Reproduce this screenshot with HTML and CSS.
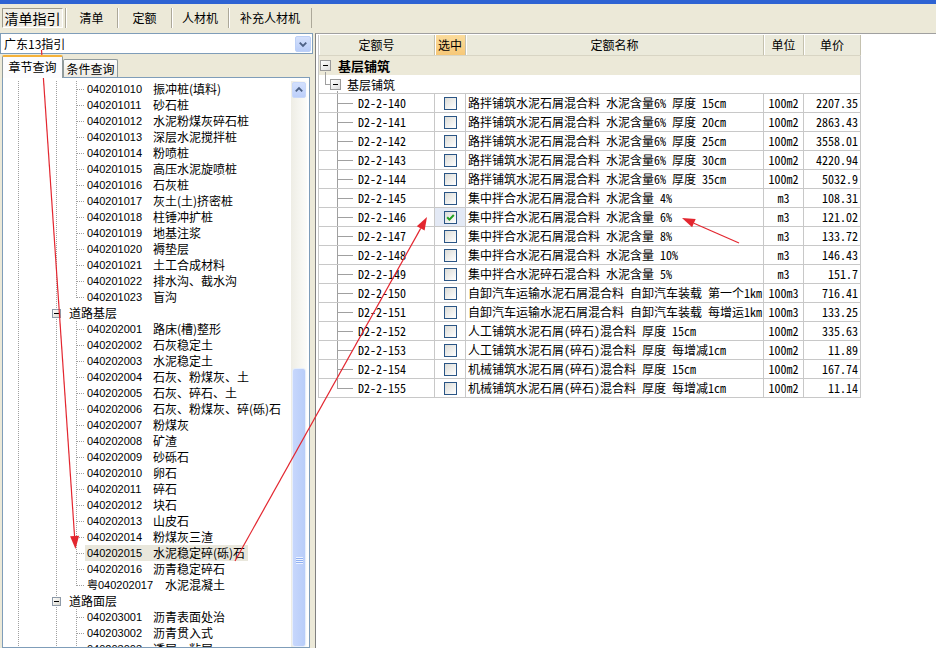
FILE: index.html
```html
<!DOCTYPE html>
<html lang="zh-CN">
<head>
<meta charset="utf-8">
<title>清单指引</title>
<link rel="stylesheet" href="styles.css">
</head>
<body>
<div class="app">
  <div class="titlebar"></div>
  <div class="tabbar">
    <div class="tab active">清单指引</div>
    <div class="tab t2">清单</div>
    <div class="tab t3">定额</div>
    <div class="tab t4">人材机</div>
    <div class="tab t5">补充人材机</div>
  </div>
  <div class="main">
    <div class="left">
      <div class="combo">
        <span class="combo-text">广东13指引</span>
        <span class="combo-btn"><svg width="15" height="16" viewBox="0 0 15 16"><path d="M4 6.5 L7.5 10 L11 6.5" fill="none" stroke="#4d6185" stroke-width="2"/></svg></span>
      </div>
      <div class="subtabs">
        <div class="subtab on">章节查询</div>
        <div class="subtab">条件查询</div>
      </div>
      <div class="treebox">
        <div class="tree">
          <div class="tr lf"><span class="lbl"><span class="cd">040201010</span><span class="nm">振冲桩(填料)</span></span></div>
          <div class="tr lf"><span class="lbl"><span class="cd">040201011</span><span class="nm">砂石桩</span></span></div>
          <div class="tr lf"><span class="lbl"><span class="cd">040201012</span><span class="nm">水泥粉煤灰碎石桩</span></span></div>
          <div class="tr lf"><span class="lbl"><span class="cd">040201013</span><span class="nm">深层水泥搅拌桩</span></span></div>
          <div class="tr lf"><span class="lbl"><span class="cd">040201014</span><span class="nm">粉喷桩</span></span></div>
          <div class="tr lf"><span class="lbl"><span class="cd">040201015</span><span class="nm">高压水泥旋喷桩</span></span></div>
          <div class="tr lf"><span class="lbl"><span class="cd">040201016</span><span class="nm">石灰桩</span></span></div>
          <div class="tr lf"><span class="lbl"><span class="cd">040201017</span><span class="nm">灰土(土)挤密桩</span></span></div>
          <div class="tr lf"><span class="lbl"><span class="cd">040201018</span><span class="nm">柱锤冲扩桩</span></span></div>
          <div class="tr lf"><span class="lbl"><span class="cd">040201019</span><span class="nm">地基注浆</span></span></div>
          <div class="tr lf"><span class="lbl"><span class="cd">040201020</span><span class="nm">褥垫层</span></span></div>
          <div class="tr lf"><span class="lbl"><span class="cd">040201021</span><span class="nm">土工合成材料</span></span></div>
          <div class="tr lf"><span class="lbl"><span class="cd">040201022</span><span class="nm">排水沟、截水沟</span></span></div>
          <div class="tr lf last"><span class="lbl"><span class="cd">040201023</span><span class="nm">盲沟</span></span></div>
          <div class="tr nd"><span class="exp"></span><span class="nt">道路基层</span></div>
          <div class="tr lf"><span class="lbl"><span class="cd">040202001</span><span class="nm">路床(槽)整形</span></span></div>
          <div class="tr lf"><span class="lbl"><span class="cd">040202002</span><span class="nm">石灰稳定土</span></span></div>
          <div class="tr lf"><span class="lbl"><span class="cd">040202003</span><span class="nm">水泥稳定土</span></span></div>
          <div class="tr lf"><span class="lbl"><span class="cd">040202004</span><span class="nm">石灰、粉煤灰、土</span></span></div>
          <div class="tr lf"><span class="lbl"><span class="cd">040202005</span><span class="nm">石灰、碎石、土</span></span></div>
          <div class="tr lf"><span class="lbl"><span class="cd">040202006</span><span class="nm">石灰、粉煤灰、碎(砾)石</span></span></div>
          <div class="tr lf"><span class="lbl"><span class="cd">040202007</span><span class="nm">粉煤灰</span></span></div>
          <div class="tr lf"><span class="lbl"><span class="cd">040202008</span><span class="nm">矿渣</span></span></div>
          <div class="tr lf"><span class="lbl"><span class="cd">040202009</span><span class="nm">砂砾石</span></span></div>
          <div class="tr lf"><span class="lbl"><span class="cd">040202010</span><span class="nm">卵石</span></span></div>
          <div class="tr lf"><span class="lbl"><span class="cd">040202011</span><span class="nm">碎石</span></span></div>
          <div class="tr lf"><span class="lbl"><span class="cd">040202012</span><span class="nm">块石</span></span></div>
          <div class="tr lf"><span class="lbl"><span class="cd">040202013</span><span class="nm">山皮石</span></span></div>
          <div class="tr lf"><span class="lbl"><span class="cd">040202014</span><span class="nm">粉煤灰三渣</span></span></div>
          <div class="tr lf"><span class="lbl sel"><span class="cd">040202015</span><span class="nm">水泥稳定碎(砾)石</span></span></div>
          <div class="tr lf"><span class="lbl"><span class="cd">040202016</span><span class="nm">沥青稳定碎石</span></span></div>
          <div class="tr lf last"><span class="lbl"><span class="cd wide">粤040202017</span><span class="nm">水泥混凝土</span></span></div>
          <div class="tr nd"><span class="exp"></span><span class="nt">道路面层</span></div>
          <div class="tr lf"><span class="lbl"><span class="cd">040203001</span><span class="nm">沥青表面处治</span></span></div>
          <div class="tr lf"><span class="lbl"><span class="cd">040203002</span><span class="nm">沥青贯入式</span></span></div>
          <div class="tr lf"><span class="lbl"><span class="cd">040203003</span><span class="nm">透层、粘层</span></span></div>
        </div>
        <div class="vs">
          <div class="sb-up"><svg width="13" height="14" viewBox="0 0 13 14"><path d="M3 8.5 L6.5 5 L10 8.5" fill="none" stroke="#4d6185" stroke-width="2"/></svg></div>
          <div class="sb-track"></div>
          <div class="thumb"><div class="grip"></div></div>
        </div>
      </div>
    </div>
    <div class="right">
      <div class="grid">
        <div class="row hdr">
          <div>定额号</div><div class="hsel">选中</div><div>定额名称</div><div>单位</div><div>单价</div>
        </div>
        <div class="grp"><span class="tx"></span><b>基层铺筑</b></div>
        <div class="sub"><span class="tx"></span><span>基层铺筑</span></div>

        <div class="row"><div class="c1">D2-2-140</div><div class="c2"><span class="cb"></span></div><div class="c3">路拌铺筑水泥石屑混合料 水泥含量6% 厚度 15cm</div><div class="c4">100m2</div><div class="c5">2207.35</div></div>
        <div class="row"><div class="c1">D2-2-141</div><div class="c2"><span class="cb"></span></div><div class="c3">路拌铺筑水泥石屑混合料 水泥含量6% 厚度 20cm</div><div class="c4">100m2</div><div class="c5">2863.43</div></div>
        <div class="row"><div class="c1">D2-2-142</div><div class="c2"><span class="cb"></span></div><div class="c3">路拌铺筑水泥石屑混合料 水泥含量6% 厚度 25cm</div><div class="c4">100m2</div><div class="c5">3558.01</div></div>
        <div class="row"><div class="c1">D2-2-143</div><div class="c2"><span class="cb"></span></div><div class="c3">路拌铺筑水泥石屑混合料 水泥含量6% 厚度 30cm</div><div class="c4">100m2</div><div class="c5">4220.94</div></div>
        <div class="row"><div class="c1">D2-2-144</div><div class="c2"><span class="cb"></span></div><div class="c3">路拌铺筑水泥石屑混合料 水泥含量6% 厚度 35cm</div><div class="c4">100m2</div><div class="c5">5032.9</div></div>
        <div class="row"><div class="c1">D2-2-145</div><div class="c2"><span class="cb"></span></div><div class="c3">集中拌合水泥石屑混合料 水泥含量 4%</div><div class="c4">m3</div><div class="c5">108.31</div></div>
        <div class="row"><div class="c1">D2-2-146</div><div class="c2 on"><span class="cb"><svg width="11" height="11" viewBox="0 0 11 11"><path d="M2.2 5.2 L4.4 7.6 L8.8 3" fill="none" stroke="#21a121" stroke-width="2"/></svg></span></div><div class="c3">集中拌合水泥石屑混合料 水泥含量 6%</div><div class="c4">m3</div><div class="c5">121.02</div></div>
        <div class="row"><div class="c1">D2-2-147</div><div class="c2"><span class="cb"></span></div><div class="c3">集中拌合水泥石屑混合料 水泥含量 8%</div><div class="c4">m3</div><div class="c5">133.72</div></div>
        <div class="row"><div class="c1">D2-2-148</div><div class="c2"><span class="cb"></span></div><div class="c3">集中拌合水泥石屑混合料 水泥含量 10%</div><div class="c4">m3</div><div class="c5">146.43</div></div>
        <div class="row"><div class="c1">D2-2-149</div><div class="c2"><span class="cb"></span></div><div class="c3">集中拌合水泥碎石混合料 水泥含量 5%</div><div class="c4">m3</div><div class="c5">151.7</div></div>
        <div class="row"><div class="c1">D2-2-150</div><div class="c2"><span class="cb"></span></div><div class="c3">自卸汽车运输水泥石屑混合料 自卸汽车装载 第一个1km</div><div class="c4">100m3</div><div class="c5">716.41</div></div>
        <div class="row"><div class="c1">D2-2-151</div><div class="c2"><span class="cb"></span></div><div class="c3">自卸汽车运输水泥石屑混合料 自卸汽车装载 每增运1km</div><div class="c4">100m3</div><div class="c5">133.25</div></div>
        <div class="row"><div class="c1">D2-2-152</div><div class="c2"><span class="cb"></span></div><div class="c3">人工铺筑水泥石屑(碎石)混合料 厚度 15cm</div><div class="c4">100m2</div><div class="c5">335.63</div></div>
        <div class="row"><div class="c1">D2-2-153</div><div class="c2"><span class="cb"></span></div><div class="c3">人工铺筑水泥石屑(碎石)混合料 厚度 每增减1cm</div><div class="c4">100m2</div><div class="c5">11.89</div></div>
        <div class="row"><div class="c1">D2-2-154</div><div class="c2"><span class="cb"></span></div><div class="c3">机械铺筑水泥石屑(碎石)混合料 厚度 15cm</div><div class="c4">100m2</div><div class="c5">167.74</div></div>
        <div class="row"><div class="c1 end">D2-2-155</div><div class="c2"><span class="cb"></span></div><div class="c3">机械铺筑水泥石屑(碎石)混合料 厚度 每增减1cm</div><div class="c4">100m2</div><div class="c5">11.14</div></div>
      </div>
    </div>
  </div>
  <svg class="annot" width="936" height="648" viewBox="0 0 936 648">
    <g stroke="#e3262f" stroke-width="1.2" fill="none">
      <line x1="41.5" y1="50" x2="74.6" y2="537"/>
      <line x1="235" y1="561" x2="420.7" y2="228.4"/>
      <line x1="739" y1="243" x2="693.9" y2="223.2"/>
    </g>
    <g fill="#e3262f">
      <polygon points="79.1,535.7 70.1,536.3 75.5,549"/>
      <polygon points="424.6,230.6 416.8,226.2 427,217"/>
      <polygon points="695.7,219.1 692.1,227.3 682,218"/>
    </g>
  </svg>
</div>
</body>
</html>
```
FILE: styles.css
```css
* { box-sizing: border-box; margin: 0; padding: 0; }
html, body { width: 936px; height: 648px; overflow: hidden; }
body {
  background: #ece9d8;
  font-family: "Noto Sans CJK SC", sans-serif;
  font-size: 12px;
  color: #000;
}
.app { position: relative; width: 936px; height: 648px; overflow: hidden; }

.titlebar { height: 4px; background: #2e63d3; }

.tabbar { height: 25px; display: flex; padding: 4px 0 0 2px; }
.tab {
  height: 20px; line-height: 20px; text-align: center; font-size: 12px;
  border-left: 1px solid #aca899; box-shadow: inset 1px 0 #fff;
}
.tab.active {
  width: 61px; margin-right: 2px; font-size: 14px; line-height: 18px;
  border: 1px solid; border-color: #9d9a8b #fff #fff #9d9a8b;
  box-shadow: none; background: #f1efe6;
}
.t2 { width: 52px; }
.t3 { width: 54px; }
.t4 { width: 57px; }
.t5 { width: 84px; border-right: 1px solid #aca899; }

.main { display: flex; height: 619px; }

.left { width: 313px; display: flex; flex-direction: column; overflow: hidden; }
.combo {
  margin-top: 4px; height: 21px; border: 1px solid #7f9db9; background: #fff;
  display: flex; align-items: center; justify-content: space-between;
}
.combo-text { padding-left: 3px; line-height: 19px; font-size: 12px; }
.combo-btn {
  width: 16px; height: 16px; margin-right: 1px; border-radius: 2px;
  background: linear-gradient(#d5e1fc, #b9cdf8);
  border: 1px solid #bcd0f7;
  display: flex; align-items: center; justify-content: center;
}

.subtabs { display: flex; align-items: flex-end; height: 22px; margin-top: 1px; padding-left: 2px; }
.subtab {
  width: 55px; height: 18px; line-height: 17px; text-align: center; font-size: 12px;
  border: 1px solid #919b9c; border-bottom: none; border-radius: 2px 2px 0 0;
  background: linear-gradient(#fefefe, #eceae2);
}
.subtab.on {
  width: 61px; height: 23px; line-height: 20px; margin-bottom: -1px;
  position: relative; z-index: 1;
  background: #fcfcfe; border-top: 2px solid #f5b23a;
}

.treebox {
  flex: 1; width: 308px; margin-left: 2px; background: #fff;
  border: 1px solid #7f9db9; display: flex; padding: 3px 2px 0 0; overflow: hidden;
}
.tree { flex: 1; overflow: hidden; }

.tree { --dv: repeating-linear-gradient(to bottom, #a0a0a0 0 1px, transparent 1px 2px);
        --dh: repeating-linear-gradient(to right, #a0a0a0 0 1px, transparent 1px 2px); }
.tr {
  height: 16px; display: flex; align-items: center; white-space: nowrap;
  background-repeat: no-repeat;
}
.lf {
  background-image: var(--dv), var(--dv), var(--dv), var(--dh);
  background-size: 1px 16px, 1px 16px, 1px 16px, 8px 1px;
  background-position: 15px 0, 53px 0, 73px 0, 74px 8px;
}
.lf.last { background-size: 1px 16px, 1px 16px, 1px 9px, 8px 1px; }
.nd {
  background-image: var(--dv), var(--dv);
  background-size: 1px 16px, 1px 16px;
  background-position: 15px 0, 53px 0;
}
.lbl { margin-left: 82px; padding: 0 2px; height: 16px; line-height: 16px; display: flex; }
.lbl.sel { background: #e9e7dc; }
.cd { width: 66px; font-family: "Liberation Sans", sans-serif; font-size: 11px; }
.cd.wide { width: 78px; }
.nm { font-size: 12px; padding-right: 1px; }
.exp {
  width: 9px; height: 9px; margin-left: 49px; border: 1px solid #8e9aa8;
  background: linear-gradient(#000, #000) center / 5px 1px no-repeat,
              linear-gradient(135deg, #fff, #d8d6cc);
}
.nt { margin-left: 8px; font-size: 12px; line-height: 16px; }

.vs {
  width: 16px; display: flex; flex-direction: column;
  background: linear-gradient(to right, #eeede5, #fcfcf9);
}
.sb-up {
  height: 16px; margin: 1px 1px 0; border-radius: 2px;
  background: linear-gradient(#d3e0fd, #bccffa); border: 1px solid #c9d8fa;
  display: flex; align-items: center; justify-content: center;
}
.sb-track { height: 270px; }
.thumb {
  flex: 1; margin: 0 1px; border-radius: 3px;
  background: linear-gradient(to right, #c7d7fc, #b8cdf9);
  border: 1px solid #e6eefc;
}
.grip {
  width: 7px; height: 7px; margin: 188px auto 0;
  background: repeating-linear-gradient(to bottom, #eef3fe 0 1px, #8fb0f2 1px 2px);
}

.right {
  flex: 1; margin: 4px 0 0 2px; background: #fff;
  border-top: 1px solid #a0a0a0; border-left: 1px solid #808080;
  padding: 1px 0 0 2px;
}
.grid {
  width: 543px; border-left: 1px solid #c8c8c8; font-size: 12px;
  font-family: "Noto Sans Mono CJK SC", "Noto Sans CJK SC", monospace;
}
.row {
  display: grid; grid-template-columns: 116px 31px 298px 40px 57px;
  height: 19px; border-bottom: 1px solid #c8c8c8;
}
.row > div { border-right: 1px solid #c8c8c8; line-height: 18px; white-space: nowrap; overflow: hidden; }
.hdr { height: 21px; background: #ebeadb; border-bottom: 1px solid #d8d5c4; font-family: "Noto Sans CJK SC", sans-serif; }
.hdr > div {
  line-height: 20px; text-align: center;
  border-right: 1px solid #c4c1ae; box-shadow: inset 1px 0 #fff;
}
.hdr > .hsel { background: linear-gradient(#fbdc9c, #f6c878); }

.grp, .sub {
  height: 19px; display: flex; align-items: center; border-right: 1px solid #c8c8c8;
  font-family: "Noto Sans CJK SC", sans-serif; background-repeat: no-repeat;
}
.grp {
  background-color: #ece9d8;
  background-image: linear-gradient(#a0a0a0, #a0a0a0);
  background-size: 1px 3px; background-position: 6px 16px;
}
.grp b { margin-left: 7px; font-size: 13px; }
.sub {
  border-bottom: 1px solid #c8c8c8; background-color: #fff;
  background-image: linear-gradient(#a0a0a0, #a0a0a0), linear-gradient(#a0a0a0, #a0a0a0), linear-gradient(#a0a0a0, #a0a0a0);
  background-size: 1px 10px, 6px 1px, 1px 2px;
  background-position: 6px 0, 6px 9px, 18px 16px;
}
.sub span:last-child { margin-left: 6px; }
.tx {
  width: 11px; height: 11px; border: 1px solid #9a9a9a;
  background: linear-gradient(#000, #000) center / 5px 1px no-repeat,
              linear-gradient(135deg, #fff, #dcdcdc);
}
.grp .tx { margin-left: 1px; }
.sub .tx { margin-left: 11px; background-color: #fff; }

.c1 {
  padding-left: 39px;
  background-image: linear-gradient(#a0a0a0, #a0a0a0), linear-gradient(#a0a0a0, #a0a0a0);
  background-repeat: no-repeat;
  background-size: 1px 100%, 16px 1px;
  background-position: 18px 0, 18px 9px;
}
.c1.end { background-size: 1px 10px, 16px 1px; }
.c2 { display: flex; align-items: center; justify-content: center; }
.c2.on { background: #e3e9f5; }
.cb {
  width: 13px; height: 13px; border: 1px solid #2a5585;
  background: linear-gradient(135deg, #dcdcd7, #fff);
  display: flex; align-items: center; justify-content: center;
}
.c3 { padding-left: 2px; }
.c4 { text-align: center; }
.c5 { text-align: right; padding-right: 2px; }

.annot { position: absolute; left: 0; top: 0; pointer-events: none; }
```
